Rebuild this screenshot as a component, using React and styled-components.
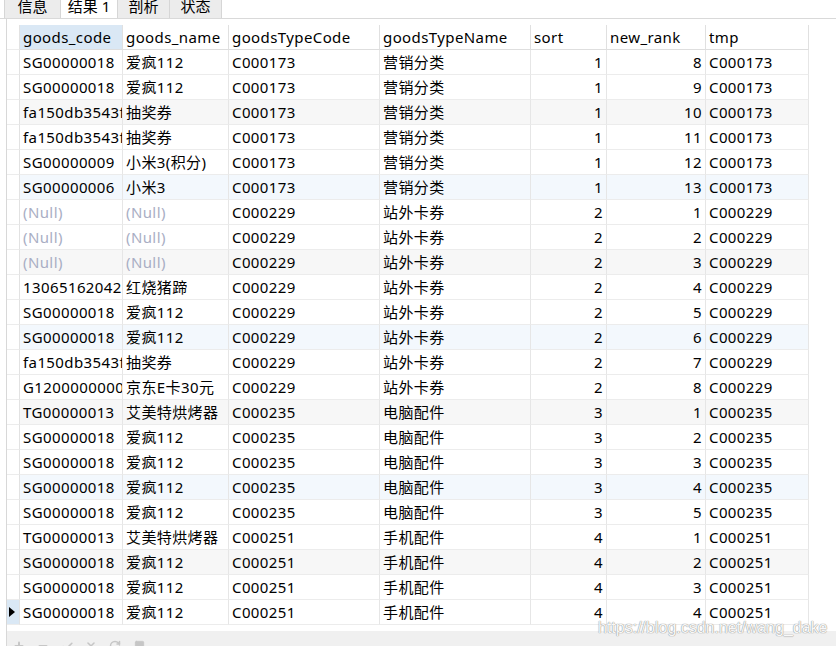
import React from "react";
import styled, { createGlobalStyle } from "styled-components";
import { Plus, Minus, Check, X, RotateCw, Square } from "lucide-react";

const GlobalStyle = createGlobalStyle`
  html, body { margin: 0; padding: 0; background: #ffffff; }
  body { font-family: "Noto Sans", "Noto Sans CJK SC", sans-serif; }
  * { box-sizing: border-box; }
`;

const COLS = "13px 103px 106px 151px 151px 76px 99px 103px";

const Page = styled.div`
  position: relative;
  width: 836px;
  height: 646px;
  overflow: hidden;
  display: flex;
  flex-direction: column;
  background: #fff;
  color: #000;
`;

const TabBar = styled.div`
  height: 19px;
  flex: none;
  display: flex;
  align-items: flex-end;
  padding-left: 4px;
  border-bottom: 1px solid #d9d9d9;
  overflow: hidden;
`;

const Tab = styled.div`
  width: ${(p) => p.$w}px;
  height: 22px;
  flex: none;
  margin-bottom: -1px;
  line-height: 18px;
  text-align: center;
  font-size: 15px;
  background: ${(p) => (p.$active ? "#ffffff" : "#ececec")};
  border-right: 1px solid #d6d6d6;
  border-left: ${(p) => (p.$first ? "1px solid #d6d6d6" : "none")};
  border-bottom: ${(p) => (p.$active ? "1px solid #ffffff" : "1px solid #d9d9d9")};
`;

const Body = styled.div`
  flex: 1;
  display: flex;
  flex-direction: column;
  margin-left: 6px;
  border-left: 1px solid #d8d8d8;
  padding-top: 6px;
`;

const Grid = styled.div`
  display: flex;
  flex-direction: column;
  width: 802px;
`;

const Row = styled.div`
  display: grid;
  grid-template-columns: ${COLS};
  height: 25px;
  background: ${(p) => p.$bg || "#ffffff"};
`;

const Cell = styled.div`
  height: 25px;
  line-height: 24px;
  font-size: 15px;
  letter-spacing: 0.4px;
  padding: 0 ${(p) => (p.$right ? "3px" : "0px")} 0 3px;
  text-align: ${(p) => (p.$right ? "right" : "left")};
  white-space: nowrap;
  overflow: hidden;
  color: ${(p) => (p.$null ? "#a9aec4" : "#000")};
  border-right: 1px solid #e6e6e6;
  border-bottom: 1px solid #ececec;
`;

const HeadCell = styled(Cell)`
  background: ${(p) => (p.$hl ? "#dae8f5" : "transparent")};
  border-bottom: 1px solid #dedede;
  border-right: 1px solid #e0e0e0;
`;

const RowHead = styled.div`
  height: 25px;
  border-right: 1px solid #e2e2e2;
  border-bottom: 1px solid #ececec;
  background: ${(p) => (p.$sel ? "#dae8f5" : "#ffffff")};
  display: flex;
  align-items: center;
  justify-content: flex-start;
  padding-left: 2px;
`;

const Marker = styled.div`
  width: 0;
  height: 0;
  border-top: 5px solid transparent;
  border-bottom: 5px solid transparent;
  border-left: 6px solid #000;
`;

const Filler = styled.div`
  height: 6px;
  flex: none;
`;

const Toolbar = styled.div`
  flex: none;
  height: 30px;
  background: #f0f0f0;
  display: flex;
  align-items: flex-start;
  padding: 9px 0 0 0;
`;

const ToolSlot = styled.div`
  width: 24px;
  display: flex;
  justify-content: center;
  color: #c6c6c6;
`;

const Watermark = styled.div`
  position: absolute;
  left: 598px;
  top: 618px;
  font-family: "Liberation Sans", Arial, sans-serif;
  font-size: 16px;
  line-height: 20px;
  color: rgba(255, 255, 255, 0.95);
  text-shadow: 0 0 1px #8a8a8a, 0 0 1px #9a9a9a;
  white-space: nowrap;
`;

const headers = [
  "goods_code",
  "goods_name",
  "goodsTypeCode",
  "goodsTypeName",
  "sort",
  "new_rank",
  "tmp",
];

const N = null;
const data = [
  ["SG00000018", "爱疯112", "C000173", "营销分类", 1, 8, "C000173"],
  ["SG00000018", "爱疯112", "C000173", "营销分类", 1, 9, "C000173"],
  ["fa150db3543f8e21", "抽奖券", "C000173", "营销分类", 1, 10, "C000173"],
  ["fa150db3543f8e21", "抽奖券", "C000173", "营销分类", 1, 11, "C000173"],
  ["SG00000009", "小米3(积分)", "C000173", "营销分类", 1, 12, "C000173"],
  ["SG00000006", "小米3", "C000173", "营销分类", 1, 13, "C000173"],
  [N, N, "C000229", "站外卡券", 2, 1, "C000229"],
  [N, N, "C000229", "站外卡券", 2, 2, "C000229"],
  [N, N, "C000229", "站外卡券", 2, 3, "C000229"],
  ["1306516204211", "红烧猪蹄", "C000229", "站外卡券", 2, 4, "C000229"],
  ["SG00000018", "爱疯112", "C000229", "站外卡券", 2, 5, "C000229"],
  ["SG00000018", "爱疯112", "C000229", "站外卡券", 2, 6, "C000229"],
  ["fa150db3543f8e21", "抽奖券", "C000229", "站外卡券", 2, 7, "C000229"],
  ["G12000000001", "京东E卡30元", "C000229", "站外卡券", 2, 8, "C000229"],
  ["TG00000013", "艾美特烘烤器", "C000235", "电脑配件", 3, 1, "C000235"],
  ["SG00000018", "爱疯112", "C000235", "电脑配件", 3, 2, "C000235"],
  ["SG00000018", "爱疯112", "C000235", "电脑配件", 3, 3, "C000235"],
  ["SG00000018", "爱疯112", "C000235", "电脑配件", 3, 4, "C000235"],
  ["SG00000018", "爱疯112", "C000235", "电脑配件", 3, 5, "C000235"],
  ["TG00000013", "艾美特烘烤器", "C000251", "手机配件", 4, 1, "C000251"],
  ["SG00000018", "爱疯112", "C000251", "手机配件", 4, 2, "C000251"],
  ["SG00000018", "爱疯112", "C000251", "手机配件", 4, 3, "C000251"],
  ["SG00000018", "爱疯112", "C000251", "手机配件", 4, 4, "C000251"],
];

const rowBg = (i) => {
  const n = i + 1;
  if (n % 6 === 3) return "#f7f7f7";
  if (n % 6 === 0) return "#f3f8fd";
  return "#ffffff";
};

const tabs = [
  { label: "信息", w: 57 },
  { label: "结果 1", w: 57, active: true },
  { label: "剖析", w: 52 },
  { label: "状态", w: 52 },
];

export default function App() {
  return (
    <>
      <GlobalStyle />
      <Page>
        <TabBar>
          {tabs.map((t, i) => (
            <Tab key={t.label} $w={t.w} $active={t.active} $first={i === 0}>
              {t.label}
            </Tab>
          ))}
        </TabBar>
        <Body>
          <Grid>
            <Row>
              <RowHead />
              {headers.map((h, i) => (
                <HeadCell key={h} $hl={i === 0}>
                  {h}
                </HeadCell>
              ))}
            </Row>
            {data.map((r, i) => (
              <Row key={i} $bg={rowBg(i)}>
                <RowHead $sel={i === data.length - 1}>
                  {i === data.length - 1 && <Marker />}
                </RowHead>
                {r.map((v, j) => (
                  <Cell key={j} $right={j === 4 || j === 5} $null={v === null}>
                    {v === null ? "(Null)" : v}
                  </Cell>
                ))}
              </Row>
            ))}
          </Grid>
          <Filler />
          <Toolbar>
            <ToolSlot><Plus size={12} strokeWidth={4} /></ToolSlot>
            <ToolSlot><Minus size={12} strokeWidth={4} /></ToolSlot>
            <ToolSlot><Check size={13} strokeWidth={3} /></ToolSlot>
            <ToolSlot><X size={12} strokeWidth={3} /></ToolSlot>
            <ToolSlot><RotateCw size={12} strokeWidth={3} /></ToolSlot>
            <ToolSlot><Square size={11} strokeWidth={2} fill="#c6c6c6" /></ToolSlot>
          </Toolbar>
        </Body>
        <Watermark>https://blog.csdn.net/wang_dake</Watermark>
      </Page>
    </>
  );
}
